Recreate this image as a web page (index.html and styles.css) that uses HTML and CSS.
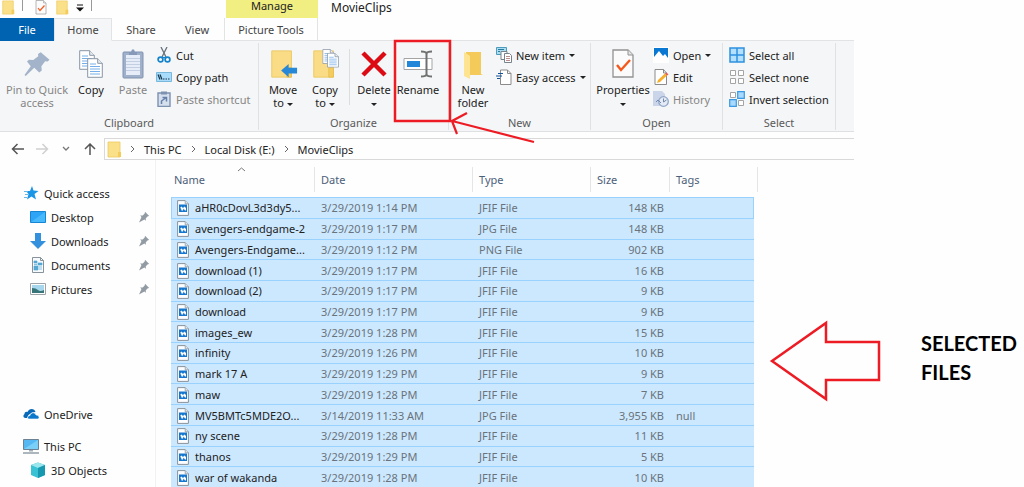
FILE: index.html
```html
<!DOCTYPE html>
<html lang="en">
<head>
<meta charset="utf-8">
<title>MovieClips</title>
<link rel="stylesheet" href="styles.css">
</head>
<body>
<svg class="defs" aria-hidden="true">
  <symbol id="folder" viewBox="0 0 14 17"><path d="M1 1h12v10h1v5H1z" fill="#fbe08a"/><path d="M1 1h12v15H1z" fill="none" stroke="#efcc62" stroke-width=".8"/><path d="M11 11h3v5h-3z" fill="#f3cc5c"/></symbol>
  <symbol id="bigfolder" viewBox="0 0 30 32"><path d="M3 2h21v28H3z" fill="#f9dc85" stroke="#edc963"/><path d="M19 20h5v10h-5z" fill="#f3cd62" stroke="#e6b94a" stroke-width=".7"/></symbol>
  <symbol id="check" viewBox="0 0 24 30"><path d="M2 1h15l5 5v22H2z" fill="#fbfbfb" stroke="#929292" stroke-width="1.3"/><path d="M17 1v5h5" fill="#e4e4e4" stroke="#929292"/><path d="m6 16 4 5 9-10" fill="none" stroke="#f4581c" stroke-width="2.4"/></symbol>
  <symbol id="sheet" viewBox="0 0 16 20"><path d="M.7.7h10l4.6 4.6v14H.7z" fill="#fff" stroke="#8996a6"/><path d="M10.700.7v4.600h4.600" fill="#e8edf4" stroke="#8996a6"/><path d="M3 6h6M3 8.500h10M3 11h10M3 13.500h10M3 16h10" stroke="#75aee8"/></symbol>
  <symbol id="pin" viewBox="0 0 12 12"><path d="m7 .8 4.200 4.200-1.400.3-2 2v2.500L6.400 8.600 1 11.400 3.500 6 2.100 4.500h2.600l2-2z" fill="#929ba3"/></symbol>
  <symbol id="image" viewBox="0 0 12 16"><path d="M.6.6h7.600l3.200 3.200v11.600H.6z" fill="#fbfdff" stroke="#8a929a"/><path d="M8.200.6v3.200h3.200" fill="#dbe6ef" stroke="#8a929a" stroke-width=".7"/><path d="M2 4.500h8v7.500H2z" fill="#1677ce"/><path d="m3 8 1.500-1.500L6 8l1.500-1.500L9 8v2.500H8L6.500 8.500 6 10.500H4.500L4 8.500z" fill="#fff"/></symbol>
  <symbol id="box" viewBox="0 0 16 16"><path d="M1.500 1.500h5v5h-5zM9.500 1.500h5v5h-5zM1.500 9.500h5v5h-5zM9.500 9.500h5v5h-5z" fill="#fff" stroke="#a4a4a4"/></symbol>
</svg>

<main class="window">
  <header class="titlebar">
    <div class="quickbar">
      <svg class="tiny"><use href="#folder"/></svg><i class="bar"></i>
      <svg class="tiny"><use href="#check"/></svg>
      <svg class="tiny"><use href="#folder"/></svg>
      <svg class="custom" viewBox="0 0 8 8"><path d="M1 1h6" stroke="#111"/><path d="M0 3.500h8l-4 4z" fill="#111"/></svg><i class="bar"></i>
    </div>
    <div class="manage">Manage</div>
    <div class="title">MovieClips</div>
  </header>

  <nav class="tabs" aria-label="Ribbon tabs">
    <button class="tab file">File</button><button class="tab home">Home</button><button class="tab share">Share</button><button class="tab view">View</button><button class="tab tools">Picture Tools</button>
  </nav>

  <section class="ribbon">
    <div class="group clipboard">
      <div class="tools-row">
        <button class="big wide off"><svg viewBox="0 0 24 24"><path d="m15 2.500 7 6-1.500 1.500-2-.3-3 4 .3 3.500-2 1.500-4-3.700L3 21.500l-1-.7 5-7L4 10l1.500-1.500 3.500.2 4-3-.2-1.700z" fill="#a3b3c9"/></svg><span>Pin to Quick<br>access</span></button>
        <button class="big"><svg viewBox="0 0 26 30"><use href="#sheet" x="1" y="1" width="16" height="20"/><use href="#sheet" x="9" y="9" width="16" height="20"/></svg><span>Copy</span></button>
        <button class="big off"><svg viewBox="0 0 24 30"><rect x="2" y="3" width="20" height="26" rx="1" fill="#9fb0cb" stroke="#8192b0"/><path d="M5 6h14v20H5z" fill="#e6edf8"/><path d="M5 9.500h14M5 12.500h14M5 15.500h14M5 18.500h14M5 21.500h14" stroke="#c2cee2"/><path d="M8 3h2l1-2.500h2L14 3h2v3H8z" fill="#8799b8"/></svg><span>Paste</span></button>
        <div class="stack">
          <button class="small"><svg viewBox="0 0 16 16"><path d="m5 0 5 10M11 0 6 10" stroke="#66717c" stroke-width="1.300"/><circle cx="4.500" cy="12.500" r="2.400" fill="none" stroke="#1583cb" stroke-width="1.700"/><circle cx="11.500" cy="12.500" r="2.400" fill="none" stroke="#1583cb" stroke-width="1.700"/><path d="m6 10 4 1M10 10l-4 1" stroke="#1583cb"/></svg>Cut</button>
          <button class="small"><svg viewBox="0 0 16 16"><path d="M.5 3.500h15v9H.5z" fill="#a9dbfb" stroke="#78b8dd"/><path d="m2 5.500 2 5m0-5 2 5M7 10h1.500m1 0H11m1 0h1.500" stroke="#17364a" stroke-width="1.200"/></svg>Copy path</button>
          <button class="small off"><svg viewBox="0 0 16 16"><path d="M2 2h12v13.500H2z" fill="#d5dfed" stroke="#7d91b1" stroke-width="1.400"/><path d="M5 .5h6v3H5z" fill="#7d91b1"/><path d="M5.500 13v-3l4-3M6.500 6.500h4v4" fill="none" stroke="#6680a8" stroke-width="1.500"/></svg>Paste shortcut</button>
        </div>
      </div>
      <h2>Clipboard</h2>
    </div>

    <div class="group organize">
      <div class="tools-row">
        <button class="big"><svg viewBox="0 0 30 32"><use href="#bigfolder"/><path d="m13 23 8-7v4h9v6h-9v4z" fill="#2788d8"/></svg><span>Move<br>to <i class="caret"></i></span></button>
        <button class="big"><svg viewBox="0 0 30 32"><use href="#bigfolder"/><use href="#sheet" x="12" y="0" width="13" height="16"/><use href="#sheet" x="17" y="4" width="13" height="16"/></svg><span>Copy<br>to <i class="caret"></i></span></button>
        <i class="divider"></i>
        <button class="big"><svg viewBox="0 0 28 30"><path d="m3 4 22 22M25 4 3 26" stroke="#dc0a12" stroke-width="4.500"/></svg><span>Delete<br><i class="caret"></i></span></button>
        <button class="big rename"><svg viewBox="0 0 30 30"><path d="M1 9.500h28v11H1z" fill="#fff" stroke="#a4a4a4"/><path d="M4 12h13v6H4z" fill="#2387d9"/><path d="M18 2.500q5 0 5.500 2 .5-2 5.500-2M18 27.500q5 0 5.500-2 .5 2 5.500 2M23.500 4v22" fill="none" stroke="#707070" stroke-width="2"/></svg><span>Rename</span></button>
      </div>
      <h2>Organize</h2>
    </div>

    <div class="group new">
      <div class="tools-row">
        <button class="big"><svg viewBox="0 0 24 30"><path d="M5 3h15v22l2 1H7z" fill="#f4cb5b"/><path d="m3 3 6 4v23l-6-3z" fill="#fee391"/></svg><span>New<br>folder</span></button>
        <div class="stack">
          <button class="small"><svg viewBox="0 0 16 16"><path d="M.5.500h10v7H.5z" fill="#abdcf1" stroke="#4e9cbd"/><path d="M2 2.500h6M2 4.500h2" stroke="#287c9d"/><path d="M5 4.500h6v8H5z" fill="#fff" stroke="#77828b"/><path d="M8.500 6.500h5l2 2v7h-7z" fill="#fff" stroke="#77828b"/><path d="M10 9.500h4M10 11.500h4M10 13.500h4" stroke="#ba8c8c"/></svg>New item <i class="caret"></i></button>
          <button class="small"><svg viewBox="0 0 16 16"><path d="M4.500 1h7l3.500 3.500v11H4.500z" fill="#fff" stroke="#8b8b8b"/><path d="M11.500 1v3.500H15" fill="none" stroke="#8b8b8b"/><path d="M2 4.500h5M0 7h6M1 9.500h3" stroke="#15549b" stroke-width="1.200"/></svg>Easy access <i class="caret"></i></button>
        </div>
      </div>
      <h2>New</h2>
    </div>

    <div class="group open">
      <div class="tools-row">
        <button class="big props"><svg viewBox="0 0 24 30"><use href="#check"/></svg><span>Properties<br><i class="caret"></i></span></button>
        <div class="stack">
          <button class="small"><svg viewBox="0 0 16 16"><path d="M0 0h16v16H0z" fill="#fff"/><path d="M1 1h14v10l-3-4-2 2-4-5-5 6z" fill="#0878d2"/></svg>Open <i class="caret"></i></button>
          <button class="small"><svg viewBox="0 0 16 16"><path d="M2 .500h8.500L13.500 4v11.500H2z" fill="#fff" stroke="#8b8b8b"/><path d="M10.500.5V4h3" fill="none" stroke="#8b8b8b"/><path d="m4 14 1-3 7-6.500 2 2L7 13z" fill="#f6af2d"/><path d="m12 4.500 1.500-1 2 2-1.500 1z" fill="#df5b5b"/></svg>Edit</button>
          <button class="small off"><svg viewBox="0 0 16 16"><path d="M0 0h9l3 3v12H0z" fill="#cad5e9"/><circle cx="10.500" cy="10.500" r="4.800" fill="#e5ebf5" stroke="#91a6c8" stroke-width="1.300"/><path d="M10.500 7.500v3.500l3-2M3 11l2-2 3 3" fill="none" stroke="#7289ad"/></svg>History</button>
        </div>
      </div>
      <h2>Open</h2>
    </div>

    <div class="group select">
      <div class="tools-row">
        <div class="stack">
          <button class="small"><svg viewBox="0 0 16 16"><path d="M1 1h14v14H1zM8 1v14M1 8h14" fill="#b5dffe" stroke="#2c91df" stroke-width="1.500"/></svg>Select all</button>
          <button class="small"><svg viewBox="0 0 16 16"><use href="#box"/></svg>Select none</button>
          <button class="small"><svg viewBox="0 0 16 16"><use href="#box"/><path d="M8.700.7h6.600v6.600H8.700zM.7 8.700h6.600v6.600H.7z" fill="#a9d9fd" stroke="#3899e5" stroke-width="1.200"/></svg>Invert selection</button>
        </div>
      </div>
      <h2>Select</h2>
    </div>
  </section>

  <div class="locationbar">
    <div class="history">
      <button aria-label="Back"><svg viewBox="0 0 14 12"><path d="M13 6H2m4.500-5L1.500 6l5 5" fill="none" stroke="#555" stroke-width="1.500"/></svg></button>
      <button aria-label="Forward"><svg viewBox="0 0 14 12"><path d="M1 6h11M7.500 1l5 5-5 5" fill="none" stroke="#d0d0d0" stroke-width="1.500"/></svg></button>
      <button aria-label="Recent locations"><svg viewBox="0 0 14 12"><path d="m4 4 3 3 3-3" fill="none" stroke="#777" stroke-width="1.300"/></svg></button>
      <button aria-label="Up"><svg viewBox="0 0 14 12"><path d="M7 12V1M2 6l5-5 5 5" fill="none" stroke="#555" stroke-width="1.500"/></svg></button>
    </div>
    <div class="address">
      <svg class="place"><use href="#folder"/></svg>
      <svg class="chev" viewBox="0 0 5 8"><path d="m1 1 3 3-3 3"/></svg><button>This PC</button>
      <svg class="chev" viewBox="0 0 5 8"><path d="m1 1 3 3-3 3"/></svg><button>Local Disk (E:)</button>
      <svg class="chev" viewBox="0 0 5 8"><path d="m1 1 3 3-3 3"/></svg><button>MovieClips</button>
    </div>
  </div>

  <div class="content">
    <nav class="sidebar" aria-label="Folders">
      <div class="places">
        <a class="root" href="#"><svg viewBox="0 0 16 16"><path d="m9 1 1.500 4.500 5 .5-4 3 1.500 5.500-4.500-3L4 14.500 5.500 9 3 6h4z" fill="#1b95e6"/><path d="M1 6.500h4M2 9.500h3M1 12.500h3" stroke="#68b7ea"/></svg>Quick access</a>
        <a href="#"><svg viewBox="0 0 16 16"><path d="M.5 2.500h15v11H.5z" fill="#2da4f5" stroke="#1586d3"/><path d="M1 13 15 3v10z" fill="#48b8fc"/></svg>Desktop<svg class="pinned"><use href="#pin"/></svg></a>
        <a href="#"><svg viewBox="0 0 16 16"><path d="M5 0h6v8h5l-8 8-8-8h5z" fill="#3390dc"/></svg>Downloads<svg class="pinned"><use href="#pin"/></svg></a>
        <a href="#"><svg viewBox="0 0 16 16"><path d="M2.500.5h8l3 3v12h-11z" fill="#f8fbfd" stroke="#87929b"/><path d="M10.500.5v3h3" fill="none" stroke="#87929b"/><path d="M4 4h3v2H4zM8 6h4v2H8zM4 9h4v4H4zM9 10h3M9 12h3M4 7.500h3" fill="#55a8d3" stroke="#55a8d3" stroke-width=".7"/></svg>Documents<svg class="pinned"><use href="#pin"/></svg></a>
        <a href="#"><svg viewBox="0 0 16 16"><path d="M.5 2.500h15v11H.5z" fill="#fff" stroke="#9da4a8"/><path d="M2 4h12v8H2z" fill="#a6d7ed"/><path d="M2 7q4 0 6 2t6 0v3H2z" fill="#377578"/></svg>Pictures<svg class="pinned"><use href="#pin"/></svg></a>
      </div>
      <div class="places lower">
        <a class="root cloud" href="#"><svg viewBox="0 0 16 16"><path d="M4 12H2.500C.5 12-.5 9.500 1.500 8c0-1.500 1.500-2.500 3-2 1.500-4 7-4 8 0L9 6.500 5.500 9z" fill="#0869b8"/><path d="M5 13c-1-2 .5-3.500 2-3.500C8 6 12 6 13 9c3 0 4 3 2 4z" fill="#0c78cb" stroke="#fff" stroke-width=".6"/></svg>OneDrive</a>
        <a class="root" href="#"><svg viewBox="0 0 16 16"><path d="M.5 1.500h15v10H.5z" fill="#55b8f3" stroke="#6c8292"/><path d="m1 11 14-9v9z" fill="#79cff8"/><path d="M6 12h4v1.500H6z" fill="#a4afb7"/><path d="M0 15h16" stroke="#7e8e99" stroke-width="1.300"/></svg>This PC</a>
        <a href="#"><svg viewBox="0 0 16 16"><path d="m1 3 7-2.500L15 3v10l-7 3-7-3z" fill="#38c2d4"/><path d="m1 3 7-2.500L15 3 8 6z" fill="#9ae6ec"/><path d="m8 6 7-3v10l-7 3z" fill="#1598b0"/></svg>3D Objects</a>
      </div>
    </nav>

    <table class="files">
      <colgroup><col class="c-name"><col class="c-date"><col class="c-type"><col class="c-size"><col class="c-tags"><col class="c-edge"></colgroup>
      <thead><tr><th class="sorted">Name<svg class="sort" viewBox="0 0 9 5"><path d="m1 4 3.500-3L8 4" fill="none" stroke="#777"/></svg></th><th>Date</th><th>Type</th><th>Size</th><th class="last">Tags</th><th class="edge"></th></tr></thead>
      <tbody>
        <tr class="focused"><td><svg><use href="#image"/></svg>aHR0cDovL3d3dy5...</td><td>3/29/2019 1:14 PM</td><td>JFIF File</td><td>148 KB</td><td></td></tr>
        <tr><td><svg><use href="#image"/></svg>avengers-endgame-2</td><td>3/29/2019 1:17 PM</td><td>JPG File</td><td>148 KB</td><td></td></tr>
        <tr><td><svg><use href="#image"/></svg>Avengers-Endgame...</td><td>3/29/2019 1:12 PM</td><td>PNG File</td><td>902 KB</td><td></td></tr>
        <tr><td><svg><use href="#image"/></svg>download (1)</td><td>3/29/2019 1:17 PM</td><td>JFIF File</td><td>16 KB</td><td></td></tr>
        <tr><td><svg><use href="#image"/></svg>download (2)</td><td>3/29/2019 1:17 PM</td><td>JFIF File</td><td>9 KB</td><td></td></tr>
        <tr><td><svg><use href="#image"/></svg>download</td><td>3/29/2019 1:17 PM</td><td>JFIF File</td><td>9 KB</td><td></td></tr>
        <tr><td><svg><use href="#image"/></svg>images_ew</td><td>3/29/2019 1:28 PM</td><td>JFIF File</td><td>15 KB</td><td></td></tr>
        <tr><td><svg><use href="#image"/></svg>infinity</td><td>3/29/2019 1:26 PM</td><td>JFIF File</td><td>10 KB</td><td></td></tr>
        <tr><td><svg><use href="#image"/></svg>mark 17 A</td><td>3/29/2019 1:29 PM</td><td>JFIF File</td><td>9 KB</td><td></td></tr>
        <tr><td><svg><use href="#image"/></svg>maw</td><td>3/29/2019 1:28 PM</td><td>JFIF File</td><td>7 KB</td><td></td></tr>
        <tr><td><svg><use href="#image"/></svg>MV5BMTc5MDE2O...</td><td>3/14/2019 11:33 AM</td><td>JPG File</td><td>3,955 KB</td><td>null</td></tr>
        <tr><td><svg><use href="#image"/></svg>ny scene</td><td>3/29/2019 1:28 PM</td><td>JFIF File</td><td>11 KB</td><td></td></tr>
        <tr><td><svg><use href="#image"/></svg>thanos</td><td>3/29/2019 1:29 PM</td><td>JFIF File</td><td>5 KB</td><td></td></tr>
        <tr><td><svg><use href="#image"/></svg>war of wakanda</td><td>3/29/2019 1:28 PM</td><td>JFIF File</td><td>10 KB</td><td></td></tr>
      </tbody>
    </table>
  </div>
</main>

<aside class="note">SELECTED<br>FILES</aside>

<svg class="marks" viewBox="0 0 1024 487" fill="none" stroke="#ed1c24" aria-hidden="true">
  <path d="M395 41h55v80h-55z" stroke-width="2.500"/>
  <path d="m534 142-82-21 15-8m-15 8 5 13" stroke-width="2.200"/>
  <path d="m772 361 54-38v19h53v38h-53v19z" stroke-width="2.500"/>
</svg>
</body>
</html>
```
FILE: styles.css
```css
* { box-sizing: border-box; }
body {
  margin: 0;
  display: flex;
  position: relative;
  height: 100vh;
  overflow: hidden;
  background: #fefefe;
  color: #222;
  font: 11px/13px "Noto Sans", "Open Sans", sans-serif;
}
button { border: 0; padding: 0; background: none; color: inherit; font: inherit; }
a { color: inherit; text-decoration: none; }
svg { flex: none; }
.defs { position: absolute; width: 0; height: 0; }
.window { flex: 1; min-width: 0; }

.titlebar { display: flex; height: 18px; }
.quickbar { display: flex; align-items: flex-start; width: 226px; gap: 7px; padding-left: 1px; }
.tiny { width: 14px; height: 15px; }
.bar { width: 1px; height: 11px; background: #999; }
.quickbar .bar + .tiny { margin-left: 4px; }
.custom { width: 8px; height: 8px; margin-top: 4px; }
.manage { width: 92px; background: #f1ee82; text-align: center; line-height: 12px; }
.title { padding-left: 13px; font-size: 12px; line-height: 16px; }

.tabs { display: flex; height: 23px; }
.tab { height: 23px; border-bottom: 1px solid #e2e3e4; color: #444; }
.tabs::after { content: ""; flex: 1; border-bottom: 1px solid #e2e3e4; }
.file { width: 54px; background: #0063b1; border-color: #0063b1; color: #fff; }
.home { width: 58px; background: #f5f6f7; border: 1px solid #e2e3e4; border-bottom-color: #f5f6f7; }
.share { width: 58px; }
.view { width: 54px; }
.tools { width: 94px; border-left: 1px solid #e2e3e4; border-right: 1px solid #e2e3e4; }

.ribbon { display: flex; background: #f5f6f7; border-bottom: 1px solid #dfe0e1; height: 91px; padding: 2px 0 1px; }
.group { display: flex; flex-direction: column; border-right: 1px solid #e0e1e2; }
.clipboard { width: 259px; }
.organize { width: 190px; }
.new { width: 142px; }
.open { width: 132px; }
.select { width: 113px; }
.tools-row { display: flex; flex: 1; padding-left: 3px; }
.clipboard .tools-row, .open .tools-row, .select .tools-row { padding-left: 4px; }
.group h2 { margin: 0; font-size: 11px; font-weight: 400; line-height: 14px; color: #5a5a5a; text-align: center; }
.big { display: flex; flex-direction: column; align-items: center; width: 42px; white-space: nowrap; }
.big svg { width: 30px; height: 30px; margin: 6px 0 4px; }
.wide { width: 66px; }
.props { width: 56px; }
.rename { width: 46px; }
.stack { display: flex; flex-direction: column; padding: 1px 0 0 2px; }
.small { display: flex; align-items: center; gap: 4px; height: 22px; white-space: nowrap; }
.small svg { width: 16px; height: 16px; }
.off { color: #858585; }
.caret { display: inline-block; border: 3px solid transparent; border-top-color: #222; border-bottom: 0; vertical-align: middle; }
.divider { width: 1px; height: 56px; margin: 6px 3px; background: #dcdddd; }

.locationbar { display: flex; padding-top: 6px; }
.history { display: flex; align-items: center; width: 104px; padding-left: 11px; gap: 10px; }
.history button { display: flex; }
.history svg { width: 14px; height: 12px; }
.address { display: flex; flex: 1; align-items: center; height: 22px; gap: 9px; padding-left: 2px; border: 1px solid #d9d9d9; border-right: 0; }
.place { width: 14px; height: 17px; }
.chev { width: 5px; height: 8px; fill: none; stroke: #666; }

.content { display: flex; }
.sidebar { width: 156px; padding-top: 21px; border-right: 1px solid #f1f1f1; }
.places a { display: flex; align-items: center; height: 24px; gap: 5px; padding: 0 5px 0 30px; }
.places .root { padding-left: 23px; }
.places svg { width: 16px; height: 16px; }
.places .pinned { width: 12px; height: 12px; margin-left: auto; }
.lower { padding-top: 101px; }
.places .cloud { margin-bottom: 8px; }

.files { table-layout: fixed; width: 587px; height: 328px; margin-left: 15px; border-spacing: 0; color: #6a737b; }
.c-name { width: 144px; }
.c-date { width: 158px; }
.c-type { width: 118px; }
.c-size { width: 79px; }
.c-tags { width: 84px; }
.files th { position: relative; height: 37px; padding: 2px 6px 0; font-weight: 400; text-align: left; color: #4c607a; background: linear-gradient(#e5e5e5, #e5e5e5) right 7px / 1px 25px no-repeat; }
.files th:first-child { padding-left: 3px; }
.files th.last { background: none; }
.files th.edge { padding: 0; }
.sort { position: absolute; left: 66px; top: 7px; width: 9px; height: 5px; }
.files td { padding: 1px 6px 0; border-bottom: 1px solid #99d1ff; background: #cce8ff; white-space: nowrap; vertical-align: middle; line-height: 16px; }
.files td:first-child { color: #222; }
.files td:nth-child(4) { text-align: right; }
.files td svg { display: inline-block; width: 12px; height: 16px; margin-right: 6px; vertical-align: top; }
.focused td { border-top: 1px solid #99d1ff; }
.focused td:first-child { border-left: 1px solid #99d1ff; padding-left: 5px; }
.focused td:last-child { border-right: 1px solid #99d1ff; }

.note { width: 170px; padding: 329px 0 0 67px; color: #000; font: bold 20px/29px Lato, sans-serif; }
.marks { position: absolute; left: 0; top: 0; width: 1024px; height: 487px; pointer-events: none; }
```
